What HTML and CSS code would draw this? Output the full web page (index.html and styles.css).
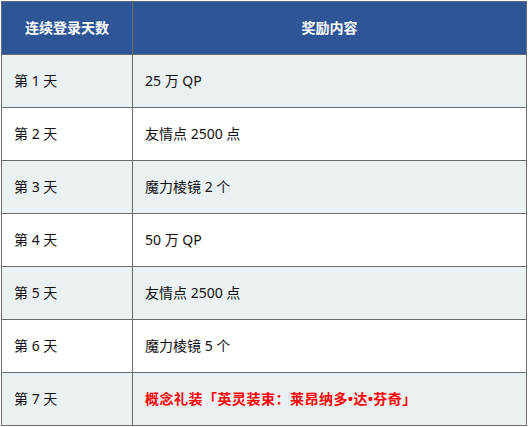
FILE: index.html
```html
<!DOCTYPE html>
<html lang="zh">
<head>
<meta charset="utf-8">
<link rel="stylesheet" href="styles.css">
</head>
<body>
<table class="tbl">
  <thead>
    <tr><th class="c1">连续登录天数</th><th class="c2">奖励内容</th></tr>
  </thead>
  <tbody>
    <tr class="alt"><td>第 1 天</td><td>25 万 QP</td></tr>
    <tr><td>第 2 天</td><td>友情点 2500 点</td></tr>
    <tr class="alt"><td>第 3 天</td><td>魔力棱镜 2 个</td></tr>
    <tr><td>第 4 天</td><td>50 万 QP</td></tr>
    <tr class="alt"><td>第 5 天</td><td>友情点 2500 点</td></tr>
    <tr><td>第 6 天</td><td>魔力棱镜 5 个</td></tr>
    <tr class="alt"><td>第 7 天</td><td class="red">概念礼装「英灵装束：莱昂纳多<span class="dot">•</span>达<span class="dot">•</span>芬奇」</td></tr>
  </tbody>
</table>
</body>
</html>
```
FILE: styles.css
```css
html, body {
  margin: 0;
  padding: 0;
  background: #ffffff;
}
body {
  padding: 1px;
  font-family: "Noto Sans", "Noto Sans CJK SC", sans-serif;
  font-size: 14px;
  color: #111;
}
.tbl {
  border-collapse: collapse;
  width: 526px;
  table-layout: fixed;
}
.tbl th, .tbl td {
  border: 1px solid #6b6b6b;
  height: 53px;
  padding: 0 12px;
  box-sizing: border-box;
  text-align: left;
  vertical-align: middle;
  line-height: 20px;
}
.tbl th {
  background: #2e5596;
  color: #ffffff;
  font-weight: bold;
  text-align: center;
}
.c1 { width: 131px; }
.alt td { background: #ebf0f3; }
.red {
  color: #ff0000;
  font-weight: bold;
  letter-spacing: 0.5px;
}
.dot {
  font-family: "Liberation Sans", sans-serif;
}
```
